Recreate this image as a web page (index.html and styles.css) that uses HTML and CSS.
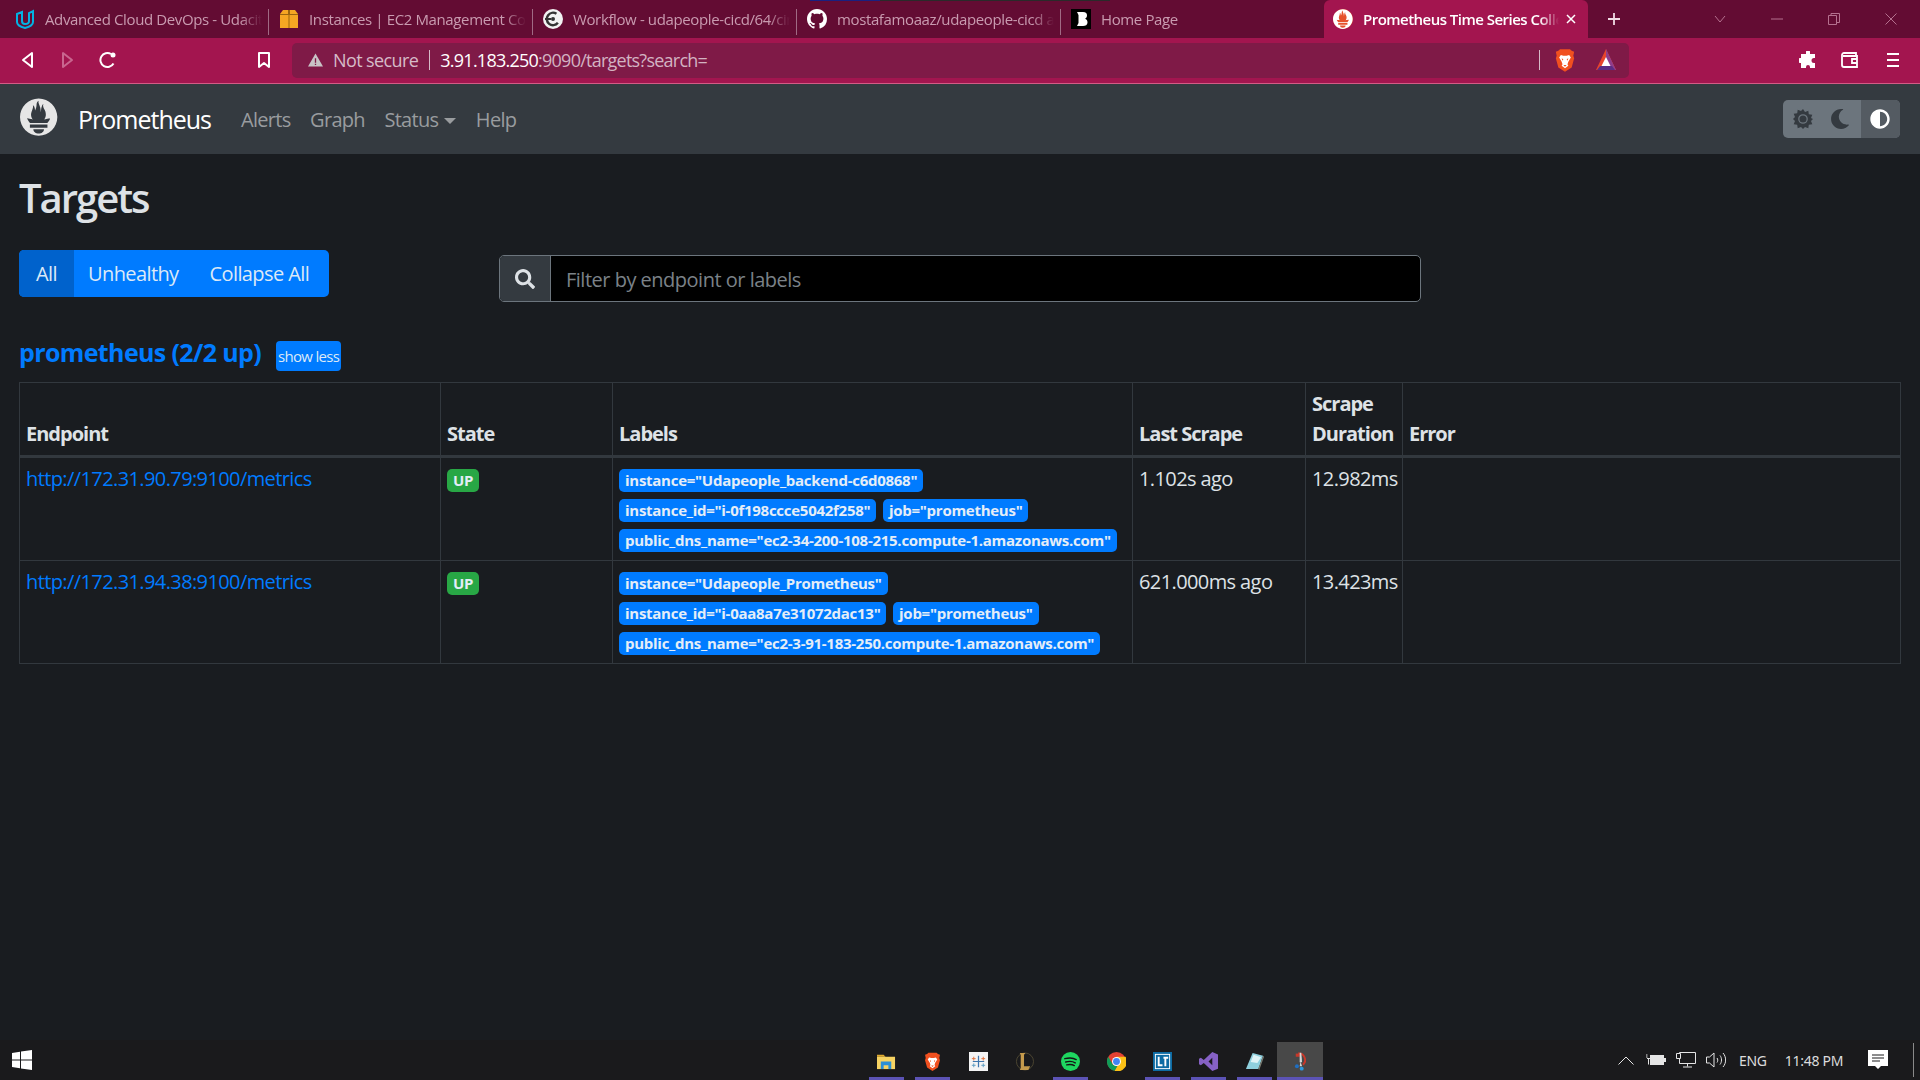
FILE: index.html
```html
<!DOCTYPE html>
<html lang="en">
<head>
<meta charset="utf-8">
<title>Prometheus Time Series Collection and Processing Server</title>
<link rel="stylesheet" href="styles.css">
</head>
<body>
<svg class="defs" width="0" height="0" aria-hidden="true">
  <symbol id="prom" viewBox="0 0 115.333 114"><path fill="currentColor" d="M56.667.667C25.372.667 0 26.036 0 57.332c0 31.295 25.372 56.666 56.667 56.666s56.666-25.371 56.666-56.666C113.333 26.036 87.961.667 56.667.667zm0 106.764c-8.904 0-16.123-5.948-16.123-13.283H72.79c0 7.334-7.219 13.283-16.123 13.283zM83.297 89.75H30.034V80.092h53.264v9.658h-.001zm-.191-14.63H30.186c-.176-.203-.356-.403-.526-.609-5.452-6.62-6.736-10.076-7.983-13.598-.021-.116 6.611 1.355 11.314 2.413 0 0 2.42.56 5.958 1.205-3.397-3.982-5.414-9.044-5.414-14.218 0-11.359 8.712-21.285 5.569-29.308 3.059.249 6.331 6.456 6.552 16.161 3.252-4.494 4.613-12.701 4.613-17.733 0-5.21 3.433-11.262 6.867-11.469-3.061 5.045.793 9.37 4.219 20.099 1.285 4.03 1.121 10.812 2.113 15.113.329-8.933 1.865-21.967 7.532-26.467-2.5 5.667.37 12.758 2.333 16.167 3.167 5.5 5.087 9.667 5.087 17.548 0 5.284-1.951 10.259-5.242 14.148 3.742-.702 6.326-1.335 6.326-1.335l12.152-2.371c.001-.001-1.765 7.261-8.549 14.254z"/></symbol>
  <symbol id="brave" viewBox="0 0 24 28"><path fill="#f1501f" d="M6 1h12l2 2 3 1-1 5 1 3-3 11-8 5-8-5L1 12l1-3-1-5 3-1z"/><path fill="#fff" d="M7 8l3 1h4l3-1 2 3-3 5-1 3 1 2-4 3-4-3 1-2-1-3-3-5z"/><path fill="#f1501f" d="M10 13l-2-1 1 3zm4 0l2-1-1 3zM10 20h4l-2 2z"/></symbol>
</svg>

<header class="tabstrip">
  <div class="tab">
    <svg class="favicon" viewBox="0 0 20 20"><path fill="none" stroke="#02b3e4" stroke-width="2" d="M2 5v8c0 3 4 5 8 6 4-1 8-3 8-6V2l-4 2v8c0 2-2 3-4 3s-3-1-3-3V3z"/></svg>
    <span class="tab-title">Advanced Cloud DevOps - Udacity</span>
  </div>
  <div class="tab">
    <svg class="favicon" viewBox="0 0 20 20"><path fill="#f5a623" d="M4 1h12l3 4v14H1V5z"/><path fill="#9a6410" d="M9 1h2v4l-1 1-1-1zM1 5h18v1H1zM9.5 6h1v13h-1z"/></svg>
    <span class="tab-title">Instances | EC2 Management Console</span>
  </div>
  <div class="tab">
    <svg class="favicon" viewBox="0 0 20 20"><circle cx="10" cy="10" r="10" fill="#f2f2f2"/><circle cx="10" cy="10" r="6.2" fill="none" stroke="#343434" stroke-width="2.4" stroke-dasharray="28 11" transform="rotate(38 10 10)"/><circle cx="10" cy="10" r="2" fill="#343434"/><path fill="#343434" d="M2 9h6v2H2z"/></svg>
    <span class="tab-title">Workflow - udapeople-cicd/64/circleci</span>
  </div>
  <div class="tab">
    <svg class="favicon" viewBox="0 0 16 16"><path fill="#fff" d="M8 0C3.58 0 0 3.58 0 8c0 3.54 2.29 6.53 5.47 7.59.4.07.55-.17.55-.38 0-.19-.01-.82-.01-1.49-2.01.37-2.53-.49-2.69-.94-.09-.23-.48-.94-.82-1.13-.28-.15-.68-.52-.01-.53.63-.01 1.08.58 1.23.82.72 1.21 1.87.87 2.33.66.07-.52.28-.87.51-1.07-1.78-.2-3.64-.89-3.64-3.95 0-.87.31-1.59.82-2.15-.08-.2-.36-1.02.08-2.12 0 0 .67-.21 2.2.82.64-.18 1.32-.27 2-.27s1.36.09 2 .27c1.53-1.04 2.2-.82 2.2-.82.44 1.1.16 1.92.08 2.12.51.56.82 1.27.82 2.15 0 3.07-1.87 3.75-3.65 3.95.29.25.54.73.54 1.48 0 1.07-.01 1.93-.01 2.2 0 .21.15.46.55.38A8.013 8.013 0 0016 8c0-4.42-3.58-8-8-8z"/></svg>
    <span class="tab-title">mostafamoaaz/udapeople-cicd at</span>
  </div>
  <div class="tab">
    <svg class="favicon" viewBox="0 0 20 20"><path fill="#000" d="M0 0h20v20H0z"/><path fill="#fff" d="M6 3h6c3 0 4 1.500 4 3.500 0 1.500-.8 2.800-2 3.300 1.500.5 2.500 1.700 2.500 3.700 0 2.500-2 3.500-4.500 3.500H6l1.500-3V6z"/></svg>
    <span class="tab-title">Home Page</span>
  </div>
  <div class="tab tab-active">
    <span class="favicon prom-favicon"><svg><use href="#prom"/></svg></span>
    <span class="tab-title">Prometheus Time Series Collection</span>
    <svg class="tab-close" viewBox="0 0 10 10"><path d="M1 1l8 8M9 1l-8 8" stroke="#fff" stroke-width="1.500"/></svg>
  </div>
  <svg class="newtab" viewBox="0 0 14 14"><path d="M7 1v12M1 7h12" stroke="#f0dbe4" stroke-width="1.800"/></svg>
  <div class="window-controls">
    <svg class="win win-chevron" viewBox="0 0 12 12"><path d="M1 3l5 6 5-6" fill="none" stroke="#b5718f"/></svg>
    <svg class="win" viewBox="0 0 12 12"><path d="M0 6h12" stroke="#b5718f"/></svg>
    <svg class="win" viewBox="0 0 12 12"><path d="M.5 2.500h8v9h-8zM3 2.500V.5h8.500v9h-3" fill="none" stroke="#b5718f"/></svg>
    <svg class="win" viewBox="0 0 12 12"><path d="M.5.5l11 11M11.500.5l-11 11" stroke="#b5718f"/></svg>
  </div>
</header>

<div class="toolbar">
  <svg class="tool tool-back" viewBox="0 0 16 18"><path d="M12 2v14L3 9z" fill="none" stroke="#fff" stroke-width="2" stroke-linejoin="round"/></svg>
  <svg class="tool tool-fwd" viewBox="0 0 16 18"><path d="M4 2v14l9-7z" fill="none" stroke="#c9668f" stroke-width="2" stroke-linejoin="round"/></svg>
  <svg class="tool tool-reload" viewBox="0 0 18 18"><path d="M14.500 12.500A7 7 0 1 1 12 3" fill="none" stroke="#fff" stroke-width="2"/><circle cx="14" cy="4" r="2.500" fill="#fff"/></svg>
  <svg class="tool tool-mark" viewBox="0 0 16 18"><path d="M3 2h10v14l-5-4-5 4z" fill="none" stroke="#fff" stroke-width="2" stroke-linejoin="round"/></svg>
  <div class="address">
    <svg class="warn" viewBox="0 0 16 14"><path d="M8 0l8 14H0z" fill="#c9c3c6"/><path d="M7.300 5h1.400v5H7.300zm0 6h1.400v1.400H7.300z" fill="#7f1a47"/></svg>
    <span class="not-secure">Not secure</span>
    <span class="addr-sep"></span>
    <span class="url"><span class="url-host">3.91.183.250</span>:9090/targets?search=</span>
    <span class="addr-sep addr-sep-end"></span>
    <svg class="brave-shield"><use href="#brave"/></svg>
    <svg class="bat" viewBox="0 0 20 22"><path d="M10 0l10 21H0z" fill="#e8452c"/><path d="M10 0l10 21H10z" fill="#8e3d8c"/><path d="M10 8l5 10H5z" fill="#fff"/><path d="M4 17h12l3 4H1z" fill="#5b2d84"/></svg>
  </div>
  <svg class="tool tool-ext" viewBox="0 0 18 18"><path fill="#fff" d="M7 1a2 2 0 0 1 4 0v2h5v4h-1a2.500 2.500 0 0 0 0 5h1v5h-5v-1a2 2 0 0 0-4 0v1H2v-5H1a2.500 2.500 0 0 1 0-5h1V3h5z"/></svg>
  <svg class="tool tool-wallet" viewBox="0 0 20 18"><path d="M2 4a2 2 0 0 1 2-2h12v3M2 4v10a2 2 0 0 0 2 2h13V5H3M17 8h-5v4h5" fill="none" stroke="#fff" stroke-width="1.800"/></svg>
  <svg class="tool tool-menu" viewBox="0 0 16 18"><path d="M2 3h12M2 9h12M2 15h12" stroke="#fff" stroke-width="2"/></svg>
</div>

<nav class="navbar">
  <svg class="logo"><use href="#prom"/></svg>
  <a class="brand">Prometheus</a>
  <a class="nav-link">Alerts</a>
  <a class="nav-link">Graph</a>
  <a class="nav-link nav-status">Status<i class="caret"></i></a>
  <a class="nav-link">Help</a>
  <div class="theme">
    <span class="theme-btn"><svg viewBox="0 0 20 20"><path fill="currentColor" d="M10 0l2 3 3.300-1.300.5 3.500 3.500.5L18 9l2 1-2 2 1.300 3.300-3.500.5-.5 3.500L12 18l-2 2-2-2-3.300 1.300-.5-3.500-3.500-.5L2 12l-2-2 2-2L.7 4.700l3.500-.5.5-3.500L8 2z"/><circle cx="10" cy="10" r="4.200" fill="none" stroke="#6c757d" stroke-width="1.300"/></svg></span>
    <span class="theme-btn"><svg class="moon" viewBox="0 0 512 512"><path fill="currentColor" d="M283 512c79 0 151-36 199-95 7-9-1-22-12-20-127 24-244-73-244-202 0-74 40-142 104-179 10-6 8-21-4-23A256 256 0 0 0 283 0C142 0 27 115 27 256s115 256 256 256z"/></svg></span>
    <span class="theme-btn theme-on"><svg viewBox="0 0 512 512"><path fill="currentColor" d="M8 256c0 137 111 248 248 248s248-111 248-248S393 8 256 8 8 119 8 256zm248 184V72c102 0 184 82 184 184s-82 184-184 184z"/></svg></span>
  </div>
</nav>

<main class="content">
  <h1 class="title">Targets</h1>
  <div class="controls">
    <div class="btn-group">
      <button class="btn btn-active">All</button>
      <button class="btn">Unhealthy</button>
      <button class="btn">Collapse All</button>
    </div>
    <div class="search">
      <span class="search-addon"><svg viewBox="0 0 512 512"><path fill="currentColor" d="M505 442.700L405.300 343c-4.500-4.500-10.600-7-17-7H372c27.600-35.300 44-79.700 44-128C416 93.100 322.900 0 208 0S0 93.100 0 208s93.100 208 208 208c48.300 0 92.700-16.400 128-44v16.300c0 6.400 2.500 12.500 7 17l99.700 99.700c9.400 9.400 24.600 9.400 33.900 0l28.300-28.300c9.400-9.400 9.400-24.600.1-34zM208 336c-70.700 0-128-57.200-128-128 0-70.700 57.200-128 128-128 70.700 0 128 57.200 128 128 0 70.700-57.200 128-128 128z"/></svg></span>
      <span class="search-input">Filter by endpoint or labels</span>
    </div>
  </div>
  <div class="pool-head">
    <a class="pool-name">prometheus (2/2 up)</a>
    <button class="btn-small">show less</button>
  </div>
  <table class="targets">
    <thead>
      <tr>
        <th class="col-end">Endpoint</th>
        <th class="col-state">State</th>
        <th class="col-labels">Labels</th>
        <th class="col-last">Last Scrape</th>
        <th class="col-dur">Scrape Duration</th>
        <th>Error</th>
      </tr>
    </thead>
    <tbody>
      <tr>
        <td><a class="endpoint">http://172.31.90.79:9100/metrics</a></td>
        <td><span class="badge badge-up">UP</span></td>
        <td class="labels">
          <span class="badge">instance="Udapeople_backend-c6d0868"</span>
          <span class="badge">instance_id="i-0f198ccce5042f258"</span>
          <span class="badge">job="prometheus"</span>
          <span class="badge">public_dns_name="ec2-34-200-108-215.compute-1.amazonaws.com"</span>
        </td>
        <td>1.102s ago</td>
        <td>12.982ms</td>
        <td></td>
      </tr>
      <tr>
        <td><a class="endpoint">http://172.31.94.38:9100/metrics</a></td>
        <td><span class="badge badge-up">UP</span></td>
        <td class="labels">
          <span class="badge">instance="Udapeople_Prometheus"</span>
          <span class="badge">instance_id="i-0aa8a7e31072dac13"</span>
          <span class="badge">job="prometheus"</span>
          <span class="badge">public_dns_name="ec2-3-91-183-250.compute-1.amazonaws.com"</span>
        </td>
        <td>621.000ms ago</td>
        <td>13.423ms</td>
        <td></td>
      </tr>
    </tbody>
  </table>
</main>

<footer class="taskbar">
  <svg class="start" viewBox="0 0 20 20"><path fill="#fff" d="M0 3l8-1.200V9.500H0zM9 1.600L20 0v9.500H9zM0 10.500h8v7.700L0 17zM9 10.500h11V20L9 18.400z"/></svg>
  <div class="task-icons">
    <span class="task task-on"><svg viewBox="0 0 20 18"><path fill="#e2ab2e" d="M0 2h7l2 2h-9z"/><path fill="#f7d362" d="M0 4h19v13H0z"/><path fill="#2b8fd6" d="M4 9h11v8h-3v-4H7v4H4z"/></svg></span>
    <span class="task task-on"><svg viewBox="0 0 24 28"><use href="#brave"/></svg></span>
    <span class="task"><svg viewBox="0 0 20 20"><path fill="#f4f4f4" d="M0 0h20v20H0z"/><path stroke="#3f76ad" stroke-width="1.300" d="M10 4v12M4 10h12"/><path stroke="#e0713c" stroke-width="1" d="M5 5v4M3 7h4M15 5v4M13 7h4"/><path stroke="#5d9dc2" stroke-width="1" d="M5 12v4M3 14h4M15 12v4M13 14h4"/></svg></span>
    <span class="task"><svg viewBox="0 0 20 20"><circle cx="10.500" cy="10" r="9" fill="none" stroke="#5a5238" stroke-width=".8"/><path fill="#c59a4c" d="M5 1h6l-1.500 2v12H16l-2 4H5l1-2V3z"/></svg></span>
    <span class="task task-on"><svg viewBox="0 0 20 20"><circle cx="10" cy="10" r="10" fill="#1ed760"/><path d="M4 7c4-1 9-1 12 1M5 10.500c3.500-1 7.500-.7 10 1M6 13.500c3-.7 6-.5 8 .8" fill="none" stroke="#151515" stroke-width="1.500" stroke-linecap="round"/></svg></span>
    <span class="task"><svg viewBox="0 0 20 20"><circle cx="10" cy="10" r="10" fill="#e34133"/><path fill="#fbc116" d="M10 5h9.500A10 10 0 0 1 8 19.800l4-7z"/><path fill="#0f9d58" d="M1.300 5l5 8.500 4.500 1.500L8 19.800A10 10 0 0 1 1.300 5z"/><circle cx="10" cy="10" r="4.700" fill="#fff"/><circle cx="10" cy="10" r="3.600" fill="#4285f4"/></svg></span>
    <span class="task task-on"><svg viewBox="0 0 20 20"><path fill="#0d6ba3" d="M0 0h20v20H0z"/><path fill="#fff" d="M2 2h16v16H2z"/><path fill="#0d6ba3" d="M3 3h14v14H3z"/><path fill="#fff" d="M5 5h2v8h3v2H5zM11 5h5v2h-2v8h-2V7h-1z"/></svg></span>
    <span class="task task-on"><svg viewBox="0 0 20 20"><path fill="#8661c5" d="M14 0l6 2.500v15L14 20 5 11.500 2 14l-2-1V7l2-1 3 2.500zm0 6l-4 4 4 4z"/></svg></span>
    <span class="task task-on"><svg viewBox="0 0 20 20"><path fill="#8fd0de" d="M8 1l11 3-5 14H1z"/><path fill="#dff3f6" d="M9 3l8 2.500-4 6-7-1z"/><path fill="#7d7d73" d="M19 4l1 1-5 14-1-1z"/></svg></span>
    <span class="task task-on task-current"><svg viewBox="0 0 20 24"><path fill="none" stroke="#c8382a" stroke-width="2.500" d="M7 2a8 8 0 0 1 6 14"/><path fill="#c8382a" d="M4 2h5v4H4z"/><path fill="#d8d8d8" d="M9 1h2l1 12H9z"/><path fill="#d8d8d8" d="M10 12l2 6H9z"/><circle cx="5.500" cy="18" r="2.500" fill="#1f6fc2"/><circle cx="11.500" cy="21" r="2.500" fill="#2b9ae0"/></svg></span>
  </div>
  <div class="tray">
    <svg class="tray-chevron" viewBox="0 0 16 9"><path d="M.5 8.500L8 1l7.500 7.500" fill="none" stroke="#e5e5e5"/></svg>
    <svg class="tray-battery" viewBox="0 0 20 14"><path d="M0 2h1.500M0 4h1.500M1 5.500h3" stroke="#e5e5e5"/><path fill="none" stroke="#e5e5e5" d="M2.500 6v5.500"/><path fill="#e5e5e5" d="M4 2h14v10H4zM18 5h2v4h-2z"/></svg>
    <svg class="tray-net" viewBox="0 0 20 16"><path d="M3.500.5h16v11H3.500zM11.500 11.500v3M7 15h9" fill="none" stroke="#e5e5e5"/><path fill="#1a1a1c" stroke="#e5e5e5" d="M.5 1.500h4v5h-4z"/></svg>
    <svg class="tray-vol" viewBox="0 0 20 16"><path d="M.5 5h3L8 1v14l-4.500-4h-3zM11 6c1 1.300 1 3 0 4.500M14 3.500c2 2.500 2 6.500 0 9M17 1c3.500 4 3.500 10 0 14" fill="none" stroke="#e5e5e5"/></svg>
    <span class="tray-text tray-eng">ENG</span>
    <span class="tray-text tray-time">11:48 PM</span>
    <svg class="tray-note" viewBox="0 0 20 20"><path fill="#fff" d="M0 0h20v16h-7l-3 3-3-3H0z"/><path stroke="#1a1a1c" d="M4 5h12M4 8h12M4 11h8"/></svg>
    <span class="tray-edge"></span>
  </div>
</footer>
</body>
</html>
```

FILE: styles.css
```css
* { box-sizing: border-box; }
html, body { margin: 0; height: 100%; }
body {
  width: 1920px; height: 1080px; overflow: hidden;
  display: flex; flex-direction: column;
  background: #191c20; color: #dee2e6;
  font-family: "Open Sans", "Noto Sans", sans-serif;
  font-size: 20px; letter-spacing: -0.03em;
}
.defs { position: absolute; }
a { text-decoration: none; }
button { font: inherit; letter-spacing: inherit; border: 0; }

/* browser chrome */
.tabstrip { height: 38px; flex: none; display: flex; align-items: center; padding-left: 5px; background: linear-gradient(90deg, #1a2080 0 70px, #2a2a2a 70px) 810px 0 / 300px 1px no-repeat, #630c33; }
.tab { width: 264px; height: 38px; flex: none; display: flex; align-items: center; padding: 0 0 1px 10px; position: relative; font-size: 15px; letter-spacing: -0.025em; color: #c99bb0; }
.tab + .tab:not(.tab-active)::before { content: ""; position: absolute; left: -1px; top: 9px; bottom: 3px; width: 1px; background: #a06a84; }
.favicon { width: 20px; height: 20px; flex: none; margin-right: 10px; }
.prom-favicon { color: #fff; background: #e6522c; border-radius: 50%; }
.prom-favicon svg { display: block; width: 20px; height: 20px; }
.tab-title { flex: 1; min-width: 0; white-space: nowrap; overflow: hidden; -webkit-mask-image: linear-gradient(90deg, #000 90%, transparent); mask-image: linear-gradient(90deg, #000 90%, transparent); margin-right: 7px; }
.tab-active { background: #a3154f; color: #fff; font-weight: 600; letter-spacing: -0.035em; border-radius: 6px 6px 0 0; margin-left: -1px; padding-left: 9px; }
.tab-close { width: 10px; height: 10px; flex: none; margin-right: 12px; }
.newtab { width: 14px; height: 14px; margin-left: 19px; }
.window-controls { margin-left: auto; display: flex; align-items: center; }
.win { width: 12px; height: 12px; margin-right: 45px; }
.win:last-child { margin-right: 23px; }

.toolbar { height: 46px; flex: none; display: flex; align-items: center; background: #a3154f; border-bottom: 1px solid #d35b86; padding-bottom: 1px; }
.tool { flex: none; }
.tool-back { width: 16px; height: 18px; margin-left: 20px; }
.tool-fwd { width: 16px; height: 18px; margin-left: 23px; }
.tool-reload { width: 18px; height: 18px; margin-left: 24px; }
.tool-mark { width: 16px; height: 18px; margin-left: 139px; }
.address { width: 1337px; height: 35px; margin-left: 20px; display: flex; align-items: center; background: #7f1a47; border-radius: 5px; font-size: 18px; color: #d3b3c2; padding-left: 16px; }
.warn { width: 15px; height: 14px; margin-right: 10px; }
.not-secure { color: #d6bbc8; }
.addr-sep { width: 1px; height: 20px; background: #d6bbc8; margin: 0 10px 0 11px; }
.url { letter-spacing: -0.042em; }
.url-host { color: #fff; }
.addr-sep-end { margin: 0 0 0 auto; }
.brave-shield { width: 20px; height: 24px; margin-left: 15px; }
.bat { width: 20px; height: 22px; margin: 0 13px 0 21px; }
.tool-ext { width: 18px; height: 18px; margin-left: 170px; }
.tool-wallet { width: 20px; height: 18px; margin-left: 23px; }
.tool-menu { width: 16px; height: 18px; margin-left: 25px; }

/* app */
.navbar { height: 70px; flex: none; display: flex; align-items: center; background: #343a40; padding: 0 20px; }
.logo { width: 38px; height: 38px; color: #e6e6e6; margin-right: 20px; margin-top: -4px; }
.brand { font-size: 25px; letter-spacing: -0.04em; color: #fff; margin-right: 30px; }
.nav-link { color: #999c9f; margin-right: 19.5px; letter-spacing: -0.035em; }
.caret { display: inline-block; margin-left: 6px; vertical-align: 3px; border: 6px solid transparent; border-top-color: currentColor; border-bottom: 0; }
.theme { margin-left: auto; display: flex; height: 38px; background: #6c757d; border-radius: 5px; overflow: hidden; }
.theme-btn { width: 39px; display: flex; align-items: center; justify-content: center; color: #343a40; }
.theme-btn svg { width: 20px; height: 20px; }
.moon { margin-right: 4px; }
.theme-on { background: #545b62; color: #fff; padding-right: 2px; }

.content { flex: 1; padding: 0 19px; min-height: 0; }
.title { font-size: 40px; font-weight: 600; letter-spacing: -0.05em; line-height: 48px; margin: 20px 0 28px; color: #dee2e6; }
.controls { display: flex; align-items: flex-start; }
.btn-group { display: flex; width: 310px; height: 47px; border-radius: 5px; overflow: hidden; background: #007bff; color: #dce9f7; }
.btn { background: transparent; color: inherit; padding: 0 15px 0 14px; white-space: nowrap; letter-spacing: -0.03em; }
.btn + .btn + .btn { padding-left: 16px; }
.btn-active { background: #0062cc; width: 55px; padding: 0; flex: none; }
.search { width: 922px; height: 47px; margin: 5px 0 0 170px; display: flex; border: 1px solid #6c757d; border-radius: 5px; overflow: hidden; background: #000; }
.search-addon { width: 51px; display: flex; align-items: center; justify-content: center; background: #343a40; color: #dee2e6; border-right: 1px solid #6c757d; }
.search-addon svg { width: 20px; height: 20px; }
.search-input { flex: 1; padding: 2px 15px 0; display: flex; align-items: center; color: #7b8288; letter-spacing: -0.025em; }
.pool-head { display: flex; align-items: center; margin-top: 28px; height: 44px; }
.pool-name { font-size: 25px; font-weight: 700; letter-spacing: -0.025em; color: #007bff; margin-right: 15px; }
.btn-small { background: #007bff; color: #dce9f7; font-size: 15px; letter-spacing: -0.045em; height: 30px; width: 65px; padding: 0; border-radius: 4px; margin-top: 8px; }

.targets { width: 1882px; table-layout: fixed; border-collapse: collapse; margin-top: 8px; }
.targets th, .targets td { border: 1px solid #32383e; padding: 6px; line-height: 30px; vertical-align: top; text-align: left; }
.targets th { vertical-align: bottom; font-weight: 700; letter-spacing: -0.05em; border-bottom-width: 3px; }
.col-end { width: 421px; }
.col-state { width: 172px; }
.col-labels { width: 520px; }
.col-last { width: 173px; }
.col-dur { width: 97px; }
.endpoint { color: #007bff; }
.badge { display: inline-block; height: 23px; line-height: 23px; padding: 0 6px; margin-right: 2px; border-radius: 5px; background: #007bff; color: #e4edf7; font-size: 15px; font-weight: 700; letter-spacing: -0.018em; white-space: nowrap; vertical-align: baseline; }
.badge-up { background: #28a745; letter-spacing: -0.03em; }
.labels { line-height: 30px; }

/* taskbar */
.taskbar { height: 40px; flex: none; display: flex; align-items: center; background: #1a1a1c; color: #e5e5e5; }
.start { width: 20px; height: 20px; margin-left: 12px; }
.task-icons { display: flex; height: 38px; margin: 2px 0 0 831px; }
.task { width: 46px; display: flex; align-items: center; justify-content: center; position: relative; }
.task svg { width: 19px; height: 19px; }
.task-on::after { content: ""; position: absolute; left: 5.5px; right: 5.5px; bottom: 0; height: 3px; background: #5c53b5; }
.task-current { background: #484848; }
.task-current::after { left: 0; right: 0; }
.tray { display: flex; align-items: center; height: 40px; flex: 1; padding-left: 295px; }
.tray-chevron { width: 16px; height: 9px; }
.tray-battery { width: 20px; height: 14px; margin-left: 12px; }
.tray-net { width: 20px; height: 16px; margin-left: 10px; }
.tray-vol { width: 20px; height: 16px; margin-left: 10px; }
.tray-text { font-family: "Noto Sans", sans-serif; font-size: 14px; letter-spacing: -0.02em; color: #dcdcdc; }
.tray-eng { margin-left: 13px; }
.tray-time { margin-left: 18px; }
.tray-note { width: 20px; height: 20px; margin-left: 25px; }
.tray-edge { width: 1px; height: 34px; background: #8a8a8a; margin-left: 25px; }
```
